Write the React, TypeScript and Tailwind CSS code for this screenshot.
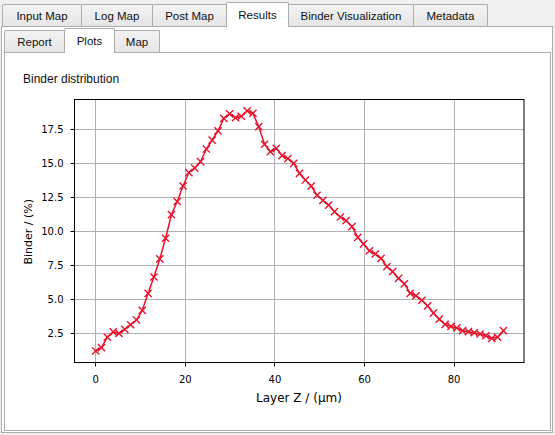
import type { ReactNode } from "react";

// binder content per layer, sampled every 1.3 µm
const binder = [
  1.2, 1.44, 2.21, 2.6, 2.5, 2.79, 3.13, 3.48, 4.19, 5.44, 6.64, 7.97, 9.49, 11.22, 12.19, 13.33, 14.32,
  14.65, 15.12, 16.05, 16.71, 17.38, 18.31, 18.63, 18.35, 18.46, 18.85, 18.68, 17.69, 16.4, 15.85, 16.1,
  15.57, 15.34, 15.0, 14.26, 13.77, 13.33, 12.65, 12.28, 11.93, 11.44, 11.05, 10.79, 10.34, 9.56, 9.07,
  8.57, 8.33, 8.01, 7.4, 7.03, 6.54, 6.13, 5.44, 5.26, 4.93, 4.51, 3.99, 3.54, 3.15, 3.01, 2.9, 2.69,
  2.62, 2.54, 2.45, 2.32, 2.13, 2.21, 2.69,
];

const sx = (v: number) => 95.7 + 4.48 * v;
const sy = (v: number) => 367.3 - 13.6 * v;
const snap = (p: number) => Math.floor(p) + 0.5;

const xTicks = [0, 20, 40, 60, 80];
const yTicks = [2.5, 5, 7.5, 10, 12.5, 15, 17.5];

const RED = "#e8122c";

function Tab({ label, width, active, first }: { label: string; width: string; active?: boolean; first?: boolean }) {
  return (
    <div
      className={`${width} ${first ? "" : "-ml-px"} flex justify-center items-center rounded-t-[2px] border border-b-0 border-[#acacac] ${
        active ? "relative z-10 h-[25px] -mb-px bg-white pt-[2px]" : "h-[22px] bg-gradient-to-b from-[#f3f3f3] to-[#e6e6e6] pt-[2px]"
      }`}
    >
      <span className="text-[11.5px] text-[#111] whitespace-nowrap">{label}</span>
    </div>
  );
}

function TabRow({ children, className }: { children: ReactNode; className: string }) {
  return <div className={`flex items-end ${className}`}>{children}</div>;
}

function Chart() {
  const pts = binder.map((b, i) => [sx(i * 1.3), sy(b)] as const);
  const line = pts.map(([x, y], i) => `${i ? "L" : "M"}${x.toFixed(1)} ${y.toFixed(1)}`).join(" ");
  const m = 3.6;
  return (
    <svg width={545} height={322} viewBox="5 90 545 322" className="block mt-[4px]">
      {xTicks.map((t) => (
        <line key={`gx${t}`} x1={snap(sx(t))} x2={snap(sx(t))} y1={99} y2={363} stroke="#b0b0b0" strokeWidth={1} />
      ))}
      {yTicks.map((t) => (
        <line key={`gy${t}`} x1={74} x2={524} y1={snap(sy(t))} y2={snap(sy(t))} stroke="#b0b0b0" strokeWidth={1} />
      ))}
      <path d={line} fill="none" stroke={RED} strokeWidth={1.5} strokeLinejoin="round" />
      {pts.map(([x, y], i) => (
        <path
          key={i}
          d={`M${x - m} ${y - m} L${x + m} ${y + m} M${x - m} ${y + m} L${x + m} ${y - m}`}
          stroke={RED}
          strokeWidth={1.4}
          fill="none"
        />
      ))}
      <rect x={74.5} y={99.5} width={449.5} height={263} fill="none" stroke="#000" strokeWidth={1} />
      <g fontFamily="'DejaVu Sans', sans-serif" fontSize={10} fill="#000">
        {xTicks.map((t) => (
          <g key={`tx${t}`}>
            <line x1={snap(sx(t))} x2={snap(sx(t))} y1={363} y2={366.5} stroke="#000" />
            <text x={sx(t)} y={382.8} textAnchor="middle">
              {t}
            </text>
          </g>
        ))}
        {yTicks.map((t) => (
          <g key={`ty${t}`}>
            <line x1={70.5} x2={74} y1={snap(sy(t))} y2={snap(sy(t))} stroke="#000" />
            <text x={63.5} y={sy(t) + 3.7} textAnchor="end">
              {t.toFixed(1)}
            </text>
          </g>
        ))}
        <text x={299} y={401.5} fontSize={12} textAnchor="middle">
          Layer Z / (µm)
        </text>
        <text transform="translate(31.5 231.7) rotate(-90)" fontSize={11} textAnchor="middle">
          Binder / (%)
        </text>
      </g>
    </svg>
  );
}

export default function App() {
  return (
    <div className="w-[555px] h-[435px] overflow-hidden bg-[#f0f0f0] font-['Liberation_Sans',Arial,sans-serif]">
      <TabRow className="h-[26px] pl-[2px]">
        <Tab first label="Input Map" width="w-[80px]" />
        <Tab label="Log Map" width="w-[72px]" />
        <Tab label="Post Map" width="w-[75px]" />
        <Tab active label="Results" width="w-[63px]" />
        <Tab label="Binder Visualization" width="w-[126px]" />
        <Tab label="Metadata" width="w-[75px]" />
      </TabRow>
      <div className="ml-[1px] w-[552px] h-[407px] border border-[#acacac] bg-white flex flex-col">
        <TabRow className="h-[25px] pl-[2px]">
          <Tab first label="Report" width="w-[61px]" />
          <Tab active label="Plots" width="w-[51px]" />
          <Tab label="Map" width="w-[46px]" />
        </TabRow>
        <div className="ml-[2px] w-[547px] h-[379px] border border-[#acacac] bg-white">
          <div className="pt-[19px] pl-[18px] text-[12px] leading-[14px] text-[#111]">Binder distribution</div>
          <Chart />
        </div>
      </div>
    </div>
  );
}
